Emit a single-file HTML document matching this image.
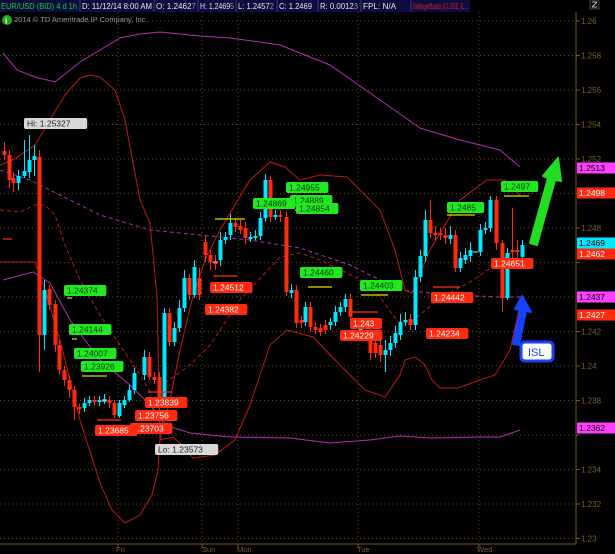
<!DOCTYPE html>
<html><head><meta charset="utf-8"><style>
body{margin:0;background:#000;width:615px;height:554px;overflow:hidden;font-family:"Liberation Sans",sans-serif}
svg{display:block}
</style></head><body>
<svg id="s" width="615" height="554" xmlns="http://www.w3.org/2000/svg" font-family="Liberation Sans, sans-serif">
<rect width="615" height="554" fill="#000"/>
<!-- header -->
<rect x="0" y="0" width="470" height="12" fill="#0c0c40"/>
<g stroke="#3a3a80" stroke-width="1"><line x1="80" y1="0" x2="80" y2="12"/><line x1="154" y1="0" x2="154" y2="12"/><line x1="198" y1="0" x2="198" y2="12"/><line x1="236" y1="0" x2="236" y2="12"/><line x1="277" y1="0" x2="277" y2="12"/><line x1="318" y1="0" x2="318" y2="12"/><line x1="361" y1="0" x2="361" y2="12"/><line x1="411" y1="0" x2="411" y2="12"/></g>
<g font-size="8" fill="#e8e8e8" lengthAdjust="spacingAndGlyphs">
<text x="1" y="9" fill="#22cc22" textLength="76" lengthAdjust="spacingAndGlyphs">EUR/USD (BID) 4 d 1h</text>
<text x="82" y="9" textLength="70" lengthAdjust="spacingAndGlyphs">D: 11/12/14 8:00 AM</text>
<text x="156" y="9" textLength="40" lengthAdjust="spacingAndGlyphs">O: 1.2462<tspan fill="#999">7</tspan></text>
<text x="200" y="9" textLength="34" lengthAdjust="spacingAndGlyphs">H: 1.2469<tspan fill="#999">5</tspan></text>
<text x="238" y="9" textLength="36" lengthAdjust="spacingAndGlyphs">L: 1.2457<tspan fill="#999">2</tspan></text>
<text x="279" y="9" textLength="33" lengthAdjust="spacingAndGlyphs">C: 1.2469</text>
<text x="320" y="9" textLength="38" lengthAdjust="spacingAndGlyphs">R: 0.0012<tspan fill="#999">3</tspan></text>
<text x="363" y="9" textLength="33" lengthAdjust="spacingAndGlyphs">FPL: N/A</text>
<text x="413" y="9" fill="#e82020" textLength="55" lengthAdjust="spacingAndGlyphs">BollingerBands (CLOSE, 0,...</text>
</g>
<rect x="590" y="0" width="9" height="9" fill="#111" stroke="#666" stroke-width="0.6"/>
<path d="M592 7 L597 2 M592 2 L597 2 M592 7 L597 7" stroke="#ddd" stroke-width="0.8"/>
<circle cx="7" cy="20" r="5" fill="#22aa22"/><text x="5" y="23.5" font-size="8" fill="#fff" font-weight="bold">i</text>
<text x="14" y="22" font-size="7.5" fill="#999">2014 © TD Ameritrade IP Company, Inc.</text>
<g id="grid"></g>
<line x1="576" y1="12" x2="576" y2="544" stroke="#7a5a20" stroke-width="1"/>
<line x1="0" y1="544" x2="576" y2="544" stroke="#7a5a20" stroke-width="1"/>
<g font-size="7.5" fill="#7a6030">
<text x="116" y="552">Fri</text><text x="202" y="552">Sun</text><text x="237" y="552">Mon</text><text x="357" y="552">Tue</text><text x="477" y="552">Wed</text>
</g>
<g id="ax" font-size="8" fill="#7a6030"></g>
<g fill="none" stroke-width="1">
<polyline stroke="#b030b0" points="3,53 17,70 35,77 55,82 80,62 100,50 120,38 140,34 160,32 200,36 230,38 260,42 280,45 300,53 330,65 380,100 420,128 460,140 500,150 520,167"/>
<polyline stroke="#b030b0" stroke-dasharray="4,3" points="0,170 30,180 60,195 100,215 150,230 200,235 250,240 300,248 350,265 400,290 450,295 500,297 520,297"/>
<polyline stroke="#b030b0" points="3,280 33,272 50,283 70,320 100,360 130,385 150,405 165,425 190,433 230,437 290,438 330,443 370,440 400,436 430,438 480,437 500,437 520,430"/>
<polyline stroke="#c01818" points="0,165 13,160 35,145 50,120 65,95 80,78 90,75 100,77 115,90 125,120 140,200 150,223 157,297 160,440"/>
<polyline stroke="#c01818" points="0,262 35,262 45,290 60,340 80,420 100,483 112,510 125,523 140,515 152,495 158,470 160,440 173,437 182,445 193,458 215,455 235,440 250,405 270,345 287,330 313,337 340,365 365,390 385,397 400,375 405,360 415,357 425,365 432,380 440,388 458,388 480,380 495,375 510,350 520,305"/>
<polyline stroke="#c01818" points="160,440 170,400 180,350 192,300 205,260 220,230 250,180 270,162 285,167 300,180 320,175 347,177 380,210 395,250 405,290 412,293 430,250 460,200 487,180 505,180 520,195"/>
<polyline stroke="#c01818" stroke-dasharray="4,3" points="0,210 20,212 35,205 45,205 55,215 65,245 80,280 100,315 120,345 140,375 150,392"/>
<polyline stroke="#c01818" stroke-dasharray="4,3" points="165,383 190,365 210,345 240,300 280,257 300,253 320,260 347,273 365,282 380,297 398,322 410,323 440,298 470,282 495,265 515,250"/>
</g>
<g id="c"></g>
<g stroke-width="1.2">
<line x1="215" y1="219" x2="245" y2="219" stroke="#dddd00"/>
<line x1="295" y1="210" x2="302" y2="210" stroke="#dddd00"/>
<line x1="308" y1="287" x2="332" y2="287" stroke="#dddd00"/>
<line x1="361" y1="295" x2="388" y2="295" stroke="#dddd00"/>
<line x1="447" y1="215" x2="475" y2="215" stroke="#dddd00"/>
<line x1="504" y1="196" x2="529" y2="196" stroke="#dddd00"/>
<line x1="67" y1="298" x2="72" y2="298" stroke="#dddd00"/>
<line x1="72" y1="339" x2="77" y2="339" stroke="#dddd00"/>
<line x1="82" y1="376" x2="107" y2="376" stroke="#dddd00"/>
<line x1="213" y1="276" x2="237" y2="276" stroke="#ff3010"/>
<line x1="352" y1="312" x2="378" y2="312" stroke="#ff3010"/>
<line x1="433" y1="287" x2="460" y2="287" stroke="#ff3010"/>
<line x1="148" y1="392" x2="172" y2="392" stroke="#ff3010"/>
<line x1="97" y1="420" x2="121" y2="420" stroke="#ff3010"/>
<line x1="3" y1="239" x2="12" y2="239" stroke="#ff3010"/>
</g>
<g id="lb" font-size="8.5"></g>
<path d="M530 243 L548 178 L543 176 L558 158 L561 181 L555 180 L537 245 Z" fill="#22dd22" stroke="#22dd22" stroke-width="2" stroke-linejoin="round"/>
<path d="M519 345 L526 311 L531 312 L522 296 L515 309 L520 310 L513 344 Z" fill="#1840ff" stroke="#1840ff" stroke-width="2" stroke-linejoin="round"/>
<rect x="521" y="342" width="32" height="19" rx="4" fill="#fff" stroke="#1840ff" stroke-width="3"/>
<text x="528" y="356" font-size="11" fill="#1840ff">ISL</text>
</svg>
<script>
var NS="http://www.w3.org/2000/svg";
function el(p,t,a,txt){var e=document.createElementNS(NS,t);for(var k in a)e.setAttribute(k,a[k]);if(txt!=null)e.textContent=txt;document.getElementById(p).appendChild(e);return e;}
function Y(p){return 21+(1.26-p)*17250;}
for(var i=0;i<16;i++){var p=1.26-i*0.002,y=Y(p);el("grid","line",{x1:0,y1:y,x2:576,y2:y,stroke:"#6a4a10","stroke-dasharray":"1,3","stroke-width":1});
el("grid","line",{x1:576,y1:y,x2:580,y2:y,stroke:"#7a5a20"});
var hide=[5,7,8,12].indexOf(i)>=0;if(!hide)el("ax","text",{x:581,y:y+3},(+p.toFixed(3)).toString());}
[118,202,238,358,479].forEach(function(x){el("grid","line",{x1:x,y1:12,x2:x,y2:544,stroke:"#6a4a10","stroke-dasharray":"1,3"});el("grid","line",{x1:x,y1:544,x2:x,y2:548,stroke:"#7a5a20"});});
var C=[[4,151,155,142,160],[9,155,180,150,188],[13,178,183,172,192],[18,183,176,170,190],[24,176,171,140,178],[29,172,160,135,178],[34,160,156,145,176],[39,157,335,150,372],[44,335,290,280,350],[49,289,305,285,310],[55,304,345,300,352],[59,345,370,340,375],[64,370,380,366,386],[69,380,390,376,398],[74,390,407,386,420],[79,407,409,404,414],[84,408,403,398,412],[89,403,400,396,406],[94,400,402,396,406],[99,402,400,396,406],[104,401,399,394,404],[109,400,403,396,408],[114,403,415,400,418],[119,416,403,400,418],[124,405,400,396,408],[129,400,390,385,402],[134,390,373,368,394],[144,375,357,350,380],[149,357,377,352,380],[154,377,380,372,384],[159,377,397,372,410],[164,397,313,308,400],[169,313,342,308,346],[174,342,328,322,346],[179,328,308,300,332],[184,308,278,270,312],[189,278,295,274,300],[194,295,267,260,298],[199,278,295,268,300],[205,242,255,236,262],[210,255,262,250,270],[215,262,263,255,270],[220,260,240,232,266],[225,240,237,232,244],[230,235,223,214,240],[235,223,227,218,232],[240,226,230,220,234],[245,228,238,222,244],[250,238,237,232,242],[255,237,236,230,240],[260,236,218,212,240],[265,218,180,174,222],[270,180,217,176,222],[275,217,215,210,220],[280,215,217,210,222],[286,217,292,212,296],[291,293,290,284,298],[296,290,323,285,328],[301,320,323,316,328],[305,322,307,302,326],[310,307,327,302,332],[315,327,330,322,334],[320,328,332,324,336],[325,325,330,320,334],[330,325,322,318,330],[335,322,312,306,326],[340,312,307,302,316],[345,307,299,294,312],[350,299,317,294,322],[360,330,328,322,334],[370,332,353,328,360],[375,343,353,338,358],[380,345,355,340,362],[385,355,350,340,372],[390,350,343,336,356],[395,343,333,326,348],[400,335,322,314,340],[405,322,320,312,326],[410,319,325,314,330],[415,325,277,270,330],[420,277,256,250,282],[425,256,220,210,262],[430,220,233,200,238],[435,233,234,226,240],[440,233,235,228,240],[445,235,238,228,244],[450,239,235,226,244],[455,235,268,230,272],[460,268,258,252,272],[465,260,255,248,264],[470,256,250,242,262],[480,252,230,224,256],[485,230,228,222,234],[490,228,200,196,232],[496,200,243,196,250],[502,243,298,240,312],[507,298,253,248,300],[512,250,252,208,262],[517,250,252,240,258],[522,257,245,240,262]];
C.forEach(function(c){var up=c[2]<c[1],col=up?"#00e8ff":"#ff2a10";
el("c","line",{x1:c[0]+0.5,y1:c[3],x2:c[0]+0.5,y2:c[4],stroke:col,"stroke-width":1});
var t=Math.min(c[1],c[2]),h=Math.max(2,Math.abs(c[1]-c[2]));el("c","rect",{x:c[0]-1.5,y:t,width:4,height:h,fill:col});});
[[475,252],[215,262],[104,401]].forEach(function(d){el("c","line",{x1:d[0]-2,y1:d[1],x2:d[0]+3,y2:d[1],stroke:"#ddd"});});
function lab(x,y,t,bg,fg,w){w=w||t.length*5.2+6;el("lb","rect",{x:x,y:y,width:w,height:11,rx:2,fill:bg});el("lb","text",{x:x+3,y:y+8.7,fill:fg},t);}
var G="#22e822",R="#ff2a10";
[[286,182,"1.24955"],[290,195,"1.24889"],[253,198,"1.24869"],[296,203,"1.24854"],[64,285,"1.24374"],[69,324,"1.24144"],[74,348,"1.24007"],[81,361,"1.23926"],[300,267,"1.24460"],[360,280,"1.24403"],[447,202,"1.2485"],[501,181,"1.2497"]].forEach(function(a){lab(a[0],a[1],a[2],G,"#004000");});
[[210,282,"1.24512"],[205,304,"1.24382"],[350,318,"1.243"],[340,330,"1.24229"],[431,292,"1.24442"],[426,328,"1.24234"],[145,397,"1.23839"],[135,410,"1.23756"],[130,423,"1.23703"],[95,425,"1.23685"],[491,258,"1.24651"]].forEach(function(a){lab(a[0],a[1],a[2],R,"#fff");});
lab(24,118,"Hi: 1.25327","#d8d8d8","#222");lab(155,444,"Lo: 1.23573","#d8d8d8","#222");
[[168,"1.2513","#ff40ff","#000"],[193,"1.2498","#ff2a10","#fff"],[243,"1.2469","#00e8ff","#000"],[254,"1.2462","#ff2a10","#fff"],[297,"1.2437","#ff40ff","#000"],[315,"1.2427","#ff2a10","#fff"],[428,"1.2362","#ff40ff","#000"]].forEach(function(a){el("lb","rect",{x:577,y:a[0]-5.5,width:38,height:11,fill:a[2]});el("lb","text",{x:579,y:a[0]+3,fill:a[3]},a[1]);});
</script>
</body></html>
